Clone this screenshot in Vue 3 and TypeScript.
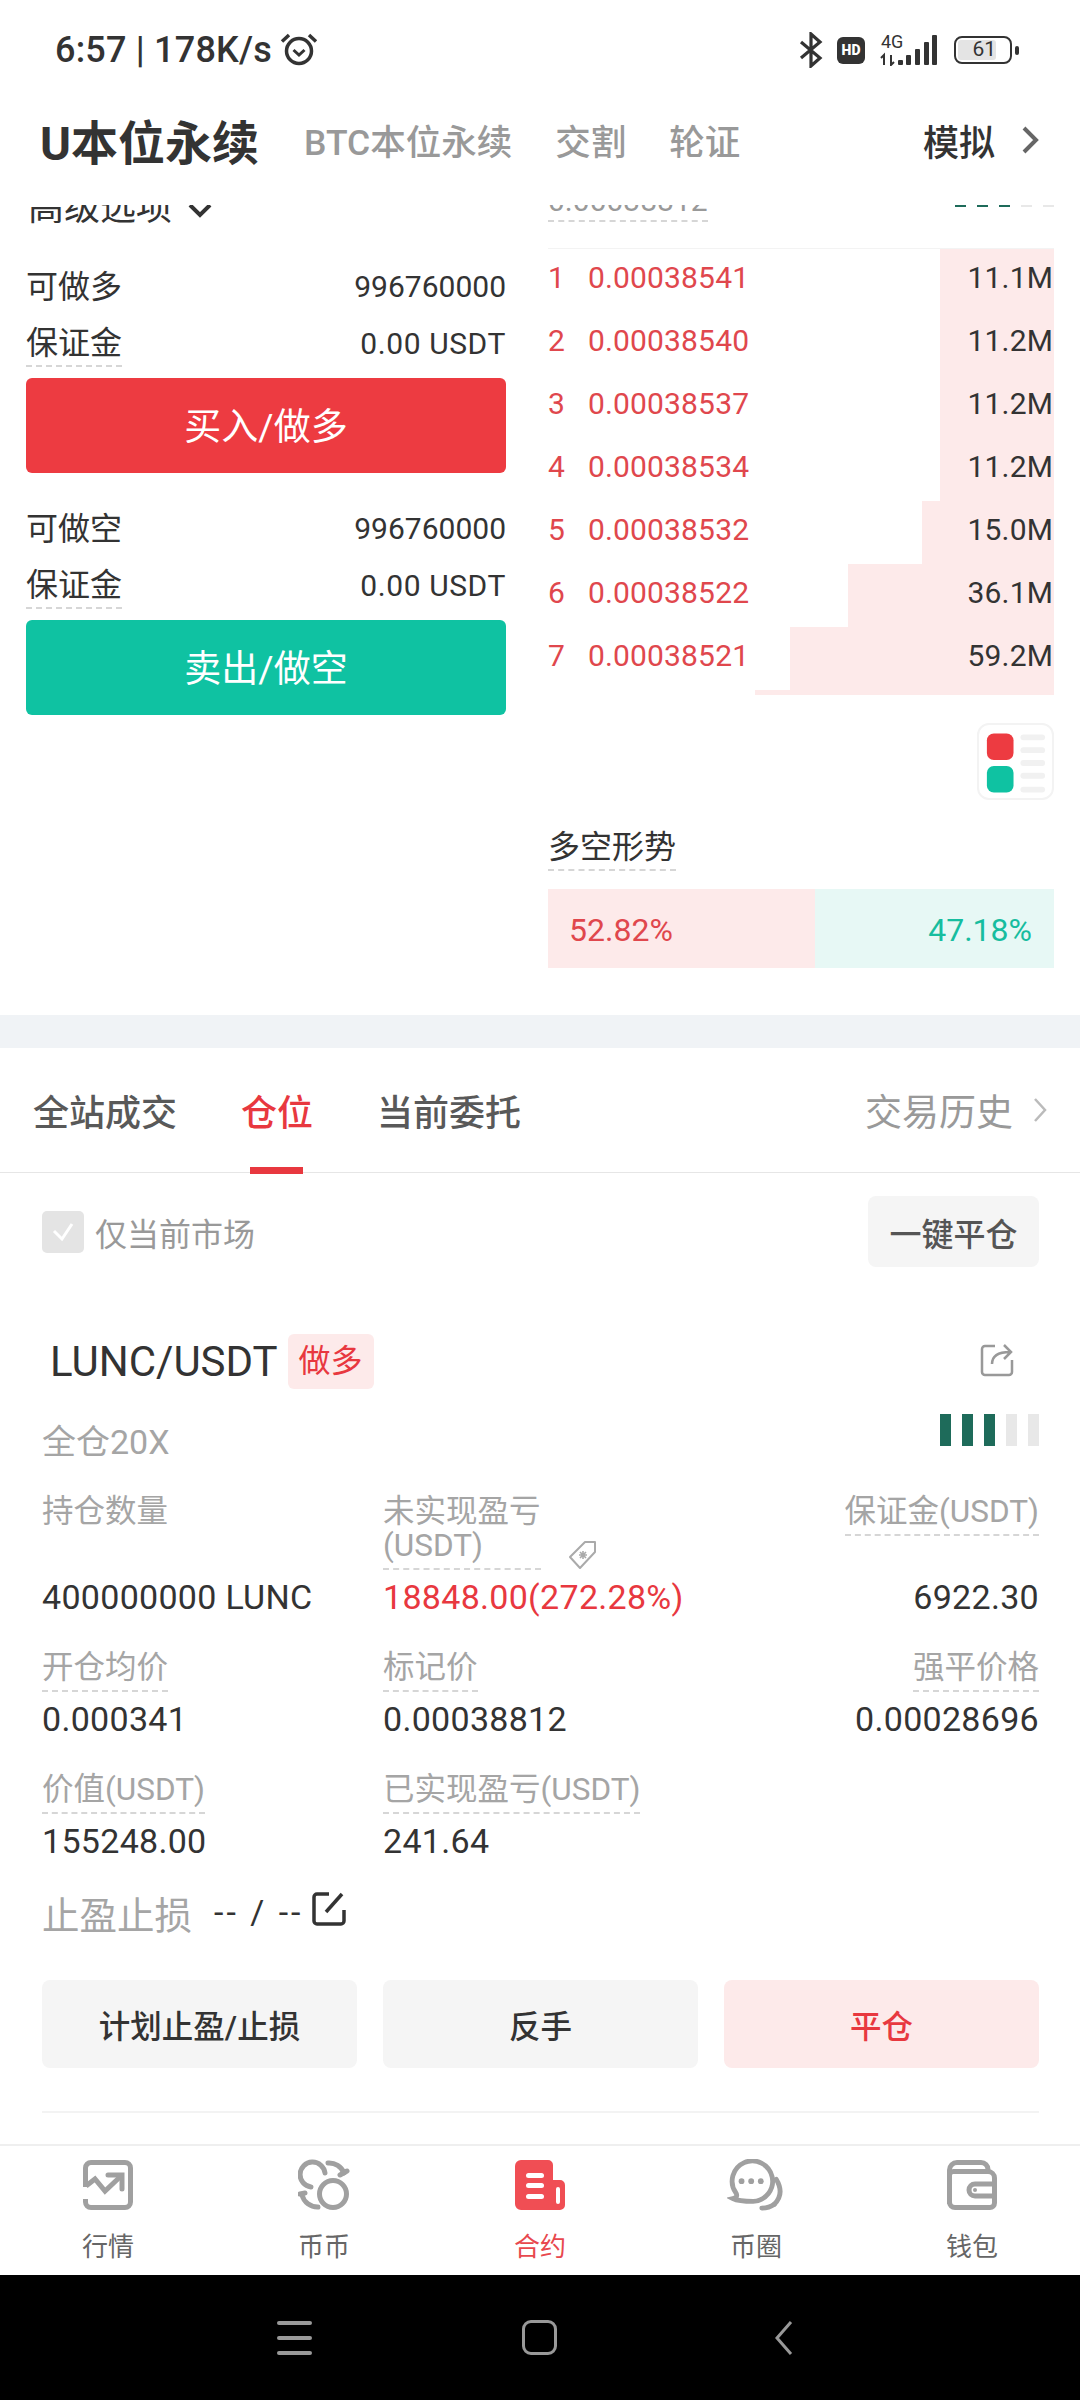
<template>
  <div class="phone">
    <!-- status bar -->
    <div class="status">
      <span class="status-text">6:57 | 178K/s</span>
      <svg class="alarm" width="38" height="34" viewBox="0 0 38 34" fill="none" stroke="#333">
        <circle cx="19" cy="18" r="12.5" stroke-width="3.5" />
        <path d="M13.5 17l5.5 5 5.5-5" stroke-width="3" />
        <path d="M2 8.5 9 2M36 8.5 29 2" stroke-width="3.5" />
      </svg>
      <div class="status-right">
        <svg width="24" height="36" viewBox="0 0 24 36" fill="none" stroke="#333" stroke-width="3.2">
          <path d="M2 10l19 16-9 8V2l9 8L2 26" />
        </svg>
        <div class="hd">HD</div>
        <svg class="signal" width="60" height="32" viewBox="0 0 60 32">
          <text x="3" y="14" class="net">4G</text>
          <path d="M3 24l3-3v10M13 21v10l3-3" fill="none" stroke="#333" stroke-width="2" />
          <rect x="20" y="26" width="5" height="5" rx="1" fill="#333" />
          <rect x="28" y="21" width="5" height="10" rx="1" fill="#333" />
          <rect x="37" y="15" width="5" height="16" rx="1" fill="#333" />
          <rect x="46" y="8" width="5" height="23" rx="1" fill="#333" />
          <rect x="54" y="1" width="5" height="30" rx="1" fill="#333" />
        </svg>
        <div class="battery"><div class="battery-fill">61</div></div>
        <div class="battery-nub"></div>
      </div>
    </div>

    <!-- top tabs -->
    <div class="header">
      <span class="head-main">U本位永续</span>
      <span class="head-tab">BTC本位永续</span>
      <span class="head-tab">交割</span>
      <span class="head-tab">轮证</span>
      <span class="head-sim">模拟</span>
      <svg width="20" height="30" viewBox="0 0 20 30" fill="none" stroke="#666" stroke-width="4">
        <path d="M4 3l12 12L4 27" />
      </svg>
    </div>

    <div class="scroll">
      <div class="scroll-inner">
        <section class="trade">
          <div class="left">
            <div class="advanced">
              <span>高级选项</span>
              <svg width="24" height="16" viewBox="0 0 24 16" fill="none" stroke="#333" stroke-width="4">
                <path d="M2 3l10 10L22 3" />
              </svg>
            </div>
            <div v-for="o in orders" :key="o.avail" class="order">
              <div class="order-row">
                <span>{{ o.avail }}</span>
                <span class="num">996760000</span>
              </div>
              <div class="order-row second">
                <span class="dashed">保证金</span>
                <span class="num unit">0.00 USDT</span>
              </div>
              <button class="order-btn" :class="o.cls">{{ o.btn }}</button>
            </div>
          </div>

          <div class="right">
            <div class="price-row">
              <span class="price dashed">0.00038812</span>
              <div class="risk">
                <i v-for="n in 5" :key="n" :class="{ off: n > 3 }"></i>
              </div>
            </div>
            <div class="book">
              <div v-for="(r, i) in asks" :key="i" class="ask">
                <div class="depth" :style="{ width: r.w + 'px' }"></div>
                <span class="ask-idx">{{ i + 1 }}</span>
                <span class="ask-price">{{ r.p }}</span>
                <span class="ask-qty">{{ r.q }}</span>
              </div>
              <div class="sliver"></div>
            </div>
            <div class="toggle">
              <svg width="74" height="74" viewBox="0 0 74 74">
                <rect x="8" y="8" width="27" height="27" rx="7" fill="#ed3b41" />
                <rect x="8" y="41" width="27" height="27" rx="7" fill="#0fc2a2" />
                <rect v-for="y in [9, 22, 35, 48, 62]" :key="y" x="42" :y="y" width="25" height="6" rx="3" fill="#f1f1f1" />
              </svg>
            </div>
            <div class="trend-title"><span class="dashed">多空形势</span></div>
            <div class="trend">
              <div class="trend-long">52.82%</div>
              <div class="trend-short">47.18%</div>
            </div>
          </div>
        </section>

        <div class="band"></div>

        <!-- positions -->
        <div class="tabs">
          <span class="tab">全站成交</span>
          <span class="tab active">仓位</span>
          <span class="tab">当前委托</span>
          <span class="history">交易历史</span>
          <svg width="14" height="26" viewBox="0 0 14 26" fill="none" stroke="#bbb" stroke-width="2.5">
            <path d="M2 2l10 11L2 24" />
          </svg>
        </div>

        <div class="filter">
          <div class="check">
            <svg width="24" height="20" viewBox="0 0 24 20" fill="none" stroke="#fff" stroke-width="3">
              <path d="M3 9l8 8L21 2" />
            </svg>
          </div>
          <span class="filter-text">仅当前市场</span>
          <button class="close-all">一键平仓</button>
        </div>

        <div class="position">
          <div class="pos-title">
            <span class="symbol">LUNC/USDT</span>
            <span class="badge">做多</span>
            <svg class="share" width="34" height="34" viewBox="0 0 34 34" fill="none" stroke="#999" stroke-width="2.5">
              <path d="M15 3H5a3 3 0 0 0-3 3v23a3 3 0 0 0 3 3h24a3 3 0 0 0 3-3V17" />
              <path d="M12 21c0-8 6-12 18-12M24 2l7 7-7 7" />
            </svg>
          </div>
          <div class="pos-sub">
            <span class="leverage">全仓20X</span>
            <div class="risk big">
              <i v-for="n in 5" :key="n" :class="{ off: n > 3 }"></i>
            </div>
          </div>

          <div v-for="(row, ri) in dataRows" :key="ri" class="data-row">
            <div v-for="c in row" :key="c.label" class="cell" :class="{ end: c.end }">
              <div class="cell-head">
                <span class="label" :class="{ dashed: c.dash, wrap: c.wrap }">{{ c.label }}</span>
                <svg v-if="c.wrap" class="tag" width="30" height="30" viewBox="0 0 30 30" fill="none" stroke="#aaa" stroke-width="2">
                  <path d="M2 17 17 2h10v10L12 28z" stroke-linejoin="round" />
                  <path d="M11 15l8 0M15 11v8M12 12l6 6M18 12l-6 6" stroke-width="1.6" />
                </svg>
              </div>
              <span class="value" :class="{ up: c.up }">{{ c.value }}</span>
            </div>
          </div>

          <div class="stop">
            <span class="stop-label">止盈止损</span>
            <span class="stop-value">-- / --</span>
            <svg width="36" height="36" viewBox="0 0 36 36" fill="none" stroke="#333" stroke-width="3.5">
              <path d="M18 3H6a3 3 0 0 0-3 3v24a3 3 0 0 0 3 3h24a3 3 0 0 0 3-3V19" />
              <path d="M15 21 31 3" />
            </svg>
          </div>

          <div class="actions">
            <button>计划止盈/止损</button>
            <button>反手</button>
            <button class="danger">平仓</button>
          </div>
          <div class="pos-line"></div>
        </div>
      </div>
    </div>

    <!-- bottom nav -->
    <nav class="nav">
      <div class="nav-item">
        <svg width="50" height="50" viewBox="0 0 50 50" fill="none" stroke="#a0a0a0" stroke-width="5">
          <path d="M2.500 27V8A5.500 5.500 0 0 1 8 2.500h34A5.500 5.500 0 0 1 47.500 8v34a5.500 5.500 0 0 1-5.500 5.500H8A5.500 5.500 0 0 1 2.500 42v-3" />
          <path d="M3 26l9-7 10 12 16-15" />
          <path d="M25 15h14v14" stroke-linecap="round" />
        </svg>
        <span>行情</span>
      </div>
      <div class="nav-item">
        <svg width="52" height="50" viewBox="0 0 52 50" fill="none" stroke="#a0a0a0" stroke-width="5" stroke-linecap="round">
          <circle cx="35" cy="34" r="13.500" />
          <path d="M27 13A12.500 12.500 0 1 0 13 27" />
          <path d="M30 3a16 16 0 0 1 16 10" />
          <path d="M4 35a16 16 0 0 0 16 12" />
          <path d="M42 15l7-4M2 34l5-1" />
        </svg>
        <span>币币</span>
      </div>
      <div class="nav-item active">
        <svg width="50" height="50" viewBox="0 0 50 50">
          <path d="M6 0h27a5 5 0 0 1 5 5v15h7a5 5 0 0 1 5 5v20a5 5 0 0 1-5 5H6a6 6 0 0 1-6-6V6a6 6 0 0 1 6-6z" fill="#f04e54" />
          <rect x="11" y="13" width="18" height="5" rx="2.500" fill="#fff" />
          <rect x="11" y="23" width="18" height="5" rx="2.500" fill="#fff" />
          <rect x="11" y="34" width="18" height="5" rx="2.500" fill="#fff" />
          <rect x="41" y="27" width="4" height="17" rx="2" fill="#fff" />
        </svg>
        <span>合约</span>
      </div>
      <div class="nav-item">
        <svg width="58" height="54" viewBox="0 0 58 54" fill="none" stroke="#a0a0a0" stroke-width="5" stroke-linecap="round">
          <path d="M5 41c4-1 5-3 3-6A21 21 0 1 1 26 44c-7 0-15 0-21-3z" />
          <path d="M50 21c6 10 5 19-2 26" />
          <path d="M35 51c5 0 9-1 13-4" />
          <circle cx="14" cy="23" r="3" fill="#a0a0a0" stroke="none" />
          <circle cx="24" cy="23" r="3" fill="#a0a0a0" stroke="none" />
          <circle cx="34" cy="23" r="3" fill="#a0a0a0" stroke="none" />
        </svg>
        <span>币圈</span>
      </div>
      <div class="nav-item">
        <svg width="50" height="50" viewBox="0 0 50 50" fill="none" stroke="#a0a0a0" stroke-width="5">
          <path d="M2.500 44V10A7.500 7.500 0 0 1 10 2.500h24A7 7 0 0 1 41 9.500v2" />
          <path d="M2.500 15a4 4 0 0 1 4-3.500H41a6.500 6.500 0 0 1 6.500 6.500v25a4.500 4.500 0 0 1-4.500 4.500H8a5.500 5.500 0 0 1-5.500-5.500z" />
          <path d="M47 24H28a4.500 4.500 0 0 0 0 12h19" />
          <circle cx="28" cy="30" r="2" fill="#a0a0a0" stroke="none" />
        </svg>
        <span>钱包</span>
      </div>
    </nav>

    <!-- android buttons -->
    <div class="sysbar">
      <div class="sys-menu"><i></i><i></i><i></i></div>
      <div class="sys-home"></div>
      <svg width="20" height="36" viewBox="0 0 20 36" fill="none" stroke="#999" stroke-width="3">
        <path d="M17 2 3 18l14 16" />
      </svg>
    </div>
  </div>
</template>

<script setup lang="ts">
interface Cell {
  label: string
  value: string
  dash?: boolean
  wrap?: boolean
  end?: boolean
  up?: boolean
}

const orders = [
  { avail: '可做多', btn: '买入/做多', cls: 'buy' },
  { avail: '可做空', btn: '卖出/做空', cls: 'sell' },
]

const asks = [
  { p: '0.00038541', q: '11.1M', w: 114 },
  { p: '0.00038540', q: '11.2M', w: 114 },
  { p: '0.00038537', q: '11.2M', w: 114 },
  { p: '0.00038534', q: '11.2M', w: 114 },
  { p: '0.00038532', q: '15.0M', w: 132 },
  { p: '0.00038522', q: '36.1M', w: 206 },
  { p: '0.00038521', q: '59.2M', w: 264 },
]

const dataRows: Cell[][] = [
  [
    { label: '持仓数量', value: '400000000 LUNC' },
    { label: '未实现盈亏(USDT)', value: '18848.00(272.28%)', dash: true, wrap: true, up: true },
    { label: '保证金(USDT)', value: '6922.30', dash: true, end: true },
  ],
  [
    { label: '开仓均价', value: '0.000341', dash: true },
    { label: '标记价', value: '0.00038812', dash: true },
    { label: '强平价格', value: '0.00028696', dash: true, end: true },
  ],
  [
    { label: '价值(USDT)', value: '155248.00', dash: true },
    { label: '已实现盈亏(USDT)', value: '241.64', dash: true },
  ],
]
</script>

<style>
html,
body {
  margin: 0;
  background: #fff;
}
</style>

<style scoped>
.phone {
  width: 1080px;
  height: 2400px;
  display: flex;
  flex-direction: column;
  overflow: hidden;
  background: #fff;
  color: #333;
  font-family: Roboto, "Noto Sans CJK SC", sans-serif;
}

i {
  display: block;
}

button {
  border: none;
  font-family: inherit;
  padding: 0;
}

.dashed {
  border-bottom: 2px dashed #d6d6d6;
}

/* status bar */
.status {
  height: 100px;
  flex: none;
  display: flex;
  align-items: center;
  padding: 0 61px 0 55px;
  box-sizing: border-box;
}

.status-text {
  font-size: 36px;
  font-weight: 500;
  color: #333;
  letter-spacing: 0.2px;
}

.alarm {
  margin-left: 8px;
}

.status-right {
  margin-left: auto;
  display: flex;
  align-items: center;
}

.hd {
  width: 28px;
  height: 27px;
  margin-left: 14px;
  border-radius: 6px;
  background: #333;
  color: #fff;
  font-size: 14px;
  font-weight: 900;
  line-height: 27px;
  text-align: center;
}

.signal {
  margin-left: 13px;
}

.net {
  font-size: 18px;
  fill: #333;
  font-family: Roboto, sans-serif;
}

.battery {
  width: 58px;
  height: 28px;
  margin-left: 16px;
  box-sizing: border-box;
  border: 2.5px solid #333;
  border-radius: 8px;
  padding: 2px;
}

.battery-fill {
  width: 38px;
  height: 100%;
  background: #e4e4e4;
  border-radius: 3px;
  font-size: 21px;
  line-height: 19px;
  text-align: right;
  color: #333;
}

.battery-nub {
  width: 4px;
  height: 9px;
  margin-left: 3px;
  border-radius: 2px;
  background: #333;
}

/* top tabs */
.header {
  height: 105px;
  flex: none;
  display: flex;
  align-items: center;
  padding: 0 40px 26px;
  box-sizing: border-box;
  position: relative;
  z-index: 1;
  background: #fff;
}

.head-main {
  font-size: 47px;
  font-weight: 700;
  color: #333;
  margin-right: 45px;
}

.head-tab {
  font-size: 35.5px;
  font-weight: 500;
  color: #999;
  margin-right: 43px;
}

.head-sim {
  margin-left: auto;
  margin-right: 25px;
  font-size: 36px;
  font-weight: 500;
  color: #333;
}

/* scrolled content: top of the panel sits under the header */
.scroll {
  flex: 1;
  min-height: 0;
  overflow: hidden;
}

.scroll-inner {
  margin-top: -22px;
}

.trade {
  display: flex;
  justify-content: space-between;
  padding: 0 26px 47px;
}

.left {
  width: 480px;
}

.advanced {
  height: 47px;
  box-sizing: border-box;
  padding: 0 0 6px 2px;
  display: flex;
  align-items: center;
  gap: 16px;
  font-size: 36px;
  color: #333;
}

.advanced svg {
  margin-top: 12px;
}

.order {
  padding-top: 28px;
}

.order + .order {
  padding-top: 27px;
}

.order-row {
  height: 58px;
  display: flex;
  align-items: center;
  justify-content: space-between;
  font-size: 32px;
  line-height: 44px;
}

.order-row.second {
  height: 56px;
  margin-bottom: 6px;
}

.order-row .num {
  font-size: 30px;
}

.order-row .unit {
  letter-spacing: 0.6px;
}

.order-btn {
  display: block;
  width: 100%;
  height: 95px;
  padding-bottom: 3px;
  border-radius: 6px;
  color: #fff;
  font-size: 37px;
}

.buy {
  background: #ed3b41;
}

.sell {
  background: #0fc2a2;
}

.right {
  width: 506px;
  display: flex;
  flex-direction: column;
}

.price-row {
  height: 65px;
  display: flex;
  justify-content: space-between;
  align-items: flex-start;
}

.price {
  height: 37px;
  line-height: 36px;
  font-size: 30px;
  color: #999;
}

.risk {
  display: flex;
  gap: 11px;
  height: 32px;
  margin-top: -8px;
}

.risk i {
  width: 11px;
  background: #1e6b5a;
}

.risk i.off {
  background: #e8e8e8;
}

.risk.big {
  margin-top: 0;
}

.book {
  border-top: 1px solid #f3f3f3;
}

.ask {
  height: 63px;
  box-sizing: border-box;
  padding-bottom: 7px;
  position: relative;
  display: flex;
  align-items: center;
  font-size: 30px;
  letter-spacing: 0.15px;
}

.depth {
  position: absolute;
  top: 0;
  right: 0;
  bottom: 0;
  background: #fdeaea;
}

.ask-idx,
.ask-price,
.ask-qty {
  position: relative;
}

.ask-idx {
  width: 40px;
  color: #e0474d;
}

.ask-price {
  color: #e0474d;
}

.ask-qty {
  margin-left: auto;
  padding-right: 1px;
  color: #333;
}

.sliver {
  height: 5px;
  width: 299px;
  margin-left: auto;
  background: #fdeaea;
}

.toggle {
  width: 77px;
  height: 77px;
  box-sizing: border-box;
  margin-top: 28px;
  align-self: flex-end;
  border: 2px solid #f3f3f3;
  border-radius: 12px;
  display: flex;
  align-items: center;
  justify-content: center;
}

.trend-title {
  margin-top: 25px;
  height: 45px;
  font-size: 32px;
  line-height: 44px;
}

.trend-title .dashed {
  display: inline-block;
  height: 44px;
  color: #333;
}

.trend {
  display: flex;
  height: 79px;
  margin-top: 19px;
  font-size: 32px;
  line-height: 82px;
}

.trend-long {
  width: 267px;
  padding-left: 21px;
  box-sizing: border-box;
  background: #fdeaea;
  color: #e0474d;
}

.trend-short {
  flex: 1;
  padding-right: 22px;
  text-align: right;
  background: #e7f8f5;
  color: #17bd9f;
}

.band {
  height: 33px;
  background: #f0f3f6;
}

/* position tabs */
.tabs {
  height: 125px;
  display: flex;
  align-items: center;
  padding: 0 33px;
  box-sizing: border-box;
  border-bottom: 1px solid #e6e6e6;
}

.tab {
  position: relative;
  margin-right: 64px;
  font-size: 36px;
  font-weight: 500;
  color: #595959;
}

.tab.active {
  color: #e8383f;
}

.tab.active::after {
  content: "";
  position: absolute;
  left: 9px;
  right: 10px;
  top: 83px;
  height: 7px;
  background: #e8383f;
}

.history {
  margin-left: auto;
  margin-right: 20px;
  font-size: 37px;
  color: #999;
}

.filter {
  height: 94px;
  box-sizing: border-box;
  padding: 23px 41px 0 42px;
  display: flex;
  align-items: center;
}

.check {
  width: 42px;
  height: 42px;
  border-radius: 5px;
  background: #e4e4e4;
  display: flex;
  align-items: center;
  justify-content: center;
}

.filter-text {
  margin-left: 11px;
  font-size: 32px;
  color: #999;
}

.close-all {
  margin-left: auto;
  width: 171px;
  height: 71px;
  border-radius: 8px;
  background: #f5f5f5;
  font-size: 32px;
  font-weight: 500;
  color: #555;
}

.position {
  padding: 67px 41px 0 42px;
}

.pos-title {
  height: 55px;
  display: flex;
  align-items: center;
}

.symbol {
  margin-left: 8px;
  font-size: 42px;
  color: #333;
}

.badge {
  margin-left: 10px;
  width: 86px;
  height: 55px;
  border-radius: 6px;
  background: #fdeaea;
  color: #e8383f;
  font-size: 32px;
  line-height: 55px;
  text-align: center;
}

.share {
  margin-left: auto;
  margin-right: 25px;
  margin-top: -4px;
}

.pos-sub {
  margin-top: 25px;
  height: 56px;
  display: flex;
  justify-content: space-between;
  align-items: flex-start;
}

.leverage {
  font-size: 34px;
  line-height: 56px;
  color: #a5a5a5;
}

.data-row {
  display: grid;
  grid-template-columns: 341px 1fr auto;
  margin-bottom: 27px;
}

.pos-sub + .data-row {
  margin-top: 20px;
}

.cell {
  display: flex;
  flex-direction: column;
  justify-content: space-between;
  align-items: flex-start;
}

.cell.end {
  align-items: flex-end;
}

.cell-head {
  display: flex;
  align-items: flex-end;
}

.label {
  padding: 5px 0;
  font-size: 31.5px;
  line-height: 34px;
  color: #a5a5a5;
}

.label.wrap {
  width: 158px;
}

.tag {
  margin-left: 27px;
}

.value {
  margin-top: 5px;
  font-size: 34px;
  line-height: 44px;
  letter-spacing: 0.3px;
  color: #333;
  white-space: nowrap;
}

.value.up {
  color: #e8383f;
}

.stop {
  margin-top: -6px;
  height: 56px;
  display: flex;
  align-items: center;
}

.stop-label {
  font-size: 37.5px;
  color: #a5a5a5;
}

.stop-value {
  margin-left: 22px;
  font-size: 34px;
  letter-spacing: 3px;
  color: #333;
  white-space: pre;
}

.stop svg {
  margin-left: 8px;
  margin-top: -6px;
}

.actions {
  margin-top: 40px;
  display: flex;
  gap: 26px;
}

.actions button {
  flex: 1;
  height: 88px;
  border-radius: 8px;
  background: #f5f5f5;
  color: #333;
  font-size: 31.5px;
  font-weight: 500;
}

.actions .danger {
  background: #fdeaea;
  color: #e8383f;
}

.pos-line {
  margin-top: 43px;
  height: 2px;
  background: #f3f3f3;
}

/* bottom nav */
.nav {
  height: 131px;
  flex: none;
  box-sizing: border-box;
  border-top: 2px solid #efefef;
  background: #fff;
  display: grid;
  grid-template-columns: repeat(5, 216px);
}

.nav-item {
  display: flex;
  flex-direction: column;
  align-items: center;
  padding-top: 13px;
  font-size: 26px;
  color: #666;
}

.nav-item svg {
  height: 52px;
}

.nav-item span {
  margin-top: 18px;
  line-height: 36px;
}

.nav-item.active span {
  color: #e8484e;
}

/* android nav */
.sysbar {
  height: 125px;
  flex: none;
  background: #000;
  display: flex;
  align-items: center;
  padding-left: 277px;
  box-sizing: border-box;
}

.sys-menu {
  width: 35px;
  height: 34px;
  display: flex;
  flex-direction: column;
  justify-content: space-between;
}

.sys-menu i {
  height: 4px;
  border-radius: 2px;
  background: #999;
}

.sys-home {
  width: 35px;
  height: 35px;
  margin-left: 210px;
  box-sizing: border-box;
  border: 3px solid #999;
  border-radius: 9px;
}

.sysbar svg {
  margin-left: 217px;
}
</style>
